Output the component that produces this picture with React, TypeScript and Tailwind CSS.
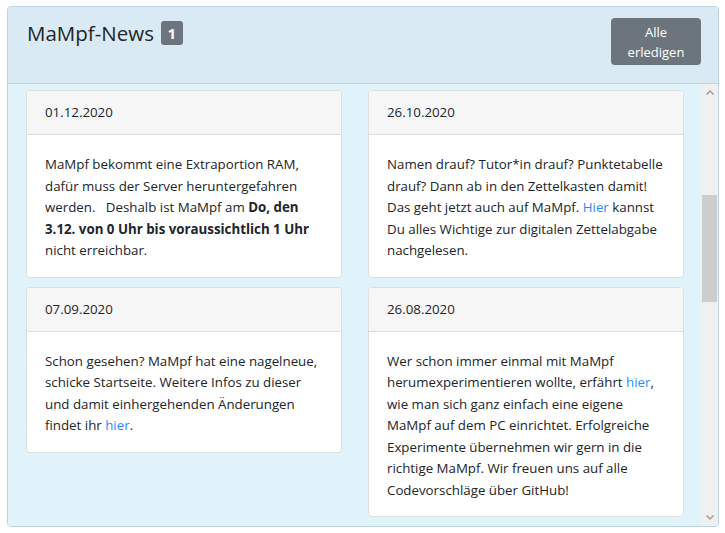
import React from "react"

type News = {
  date: string
  body: React.ReactNode
}

const link = "text-[#2a8bfb]"

const left: News[] = [
  {
    date: "01.12.2020",
    body: (
      <>
        MaMpf bekommt eine Extraportion RAM, dafür muss der Server heruntergefahren werden.{"\u00a0\u00a0 "}Deshalb ist MaMpf am{" "}
        <b className="font-bold">Do, den 3.12. von 0 Uhr bis voraussichtlich 1 Uhr</b> nicht erreichbar.
      </>
    ),
  },
  {
    date: "07.09.2020",
    body: (
      <>
        Schon gesehen? MaMpf hat eine nagelneue, schicke Startseite. Weitere Infos zu dieser und damit einhergehenden Änderungen findet ihr{" "}
        <span className={link}>hier</span>.
      </>
    ),
  },
]

const right: News[] = [
  {
    date: "26.10.2020",
    body: (
      <>
        Namen drauf? Tutor*in drauf? Punktetabelle drauf? Dann ab in den Zettelkasten damit! Das geht jetzt auch auf MaMpf.{" "}
        <span className={link}>Hier</span> kannst Du alles Wichtige zur digitalen Zettelabgabe nachgelesen.
      </>
    ),
  },
  {
    date: "26.08.2020",
    body: (
      <>
        Wer schon immer einmal mit MaMpf herumexperimentieren wollte, erfährt <span className={link}>hier</span>, wie man sich ganz
        einfach eine eigene MaMpf auf dem PC einrichtet. Erfolgreiche Experimente übernehmen wir gern in die richtige MaMpf. Wir
        freuen uns auf alle Codevorschläge über GitHub!
      </>
    ),
  },
]

function NewsCard({ item }: { item: News }) {
  return (
    <div className="bg-white border border-[#dcdfe1] rounded-[4px] overflow-hidden">
      <div className="bg-[#f6f6f6] border-b border-[#dcdfe1] px-[18px] py-[11px] leading-[21px]">{item.date}</div>
      <div className="px-[18px] pt-[19px] pb-[15px] leading-[21.5px]">{item.body}</div>
    </div>
  )
}

function Chevron({ up }: { up?: boolean }) {
  return (
    <svg width="8" height="5" viewBox="0 0 8 5" className={up ? "" : "rotate-180"}>
      <path d="M0.5 4.5 L4 1 L7.5 4.5" fill="none" stroke="#a0a0a0" strokeWidth="1.5" />
    </svg>
  )
}

export default function App() {
  return (
    <div
      className="w-[725px] h-[533px] bg-white pt-[6px] pl-[7px] text-[13.3px] text-[#212529]"
      style={{ fontFamily: '"Open Sans", "Noto Sans", sans-serif' }}
    >
      <div className="w-[712px] h-[521px] border border-[#bcd3e0] rounded-[4px] flex flex-col overflow-hidden">
        {/* HEADER */}
        <div className="h-[77px] shrink-0 bg-[#d9eaf4] border-b border-[#bcd3e0] flex justify-between pl-[19px] pr-[17px]">
          <div className="flex items-center gap-[7px] h-[24px] mt-[14px]">
            <span className="text-[20.5px] leading-[24px]">MaMpf-News</span>
            <span className="bg-[#6c757d] text-white font-bold text-[15px] rounded-[3px] w-[22px] h-[24px] flex items-center justify-center">
              1
            </span>
          </div>
          <button className="mt-[11px] w-[90px] h-[47px] bg-[#6c757d] text-white rounded-[4px] text-[13px] leading-[20px] text-center">
            Alle
            <br />
            erledigen
          </button>
        </div>

        {/* BODY */}
        <div className="flex-1 flex bg-[#e0f3fb] min-h-0">
          <div className="flex-1 overflow-hidden pt-[6px] pl-[18px] pr-[17px]">
            <div className="grid grid-cols-2 gap-x-[26px] gap-y-[9px] items-start">
              <NewsCard item={left[0]} />
              <NewsCard item={right[0]} />
              <NewsCard item={left[1]} />
              <NewsCard item={right[1]} />
            </div>
          </div>

          {/* SCROLLBAR */}
          <div className="w-[17px] bg-[#f0f0f0] flex flex-col items-center">
            <div className="h-[17px] flex items-center justify-center">
              <Chevron up />
            </div>
            <div className="flex-1 w-full pt-[94px]">
              <div className="h-[107px] mx-[1px] bg-[#cdcdcd]" />
            </div>
            <div className="h-[17px] flex items-center justify-center">
              <Chevron />
            </div>
          </div>
        </div>
      </div>
    </div>
  )
}
